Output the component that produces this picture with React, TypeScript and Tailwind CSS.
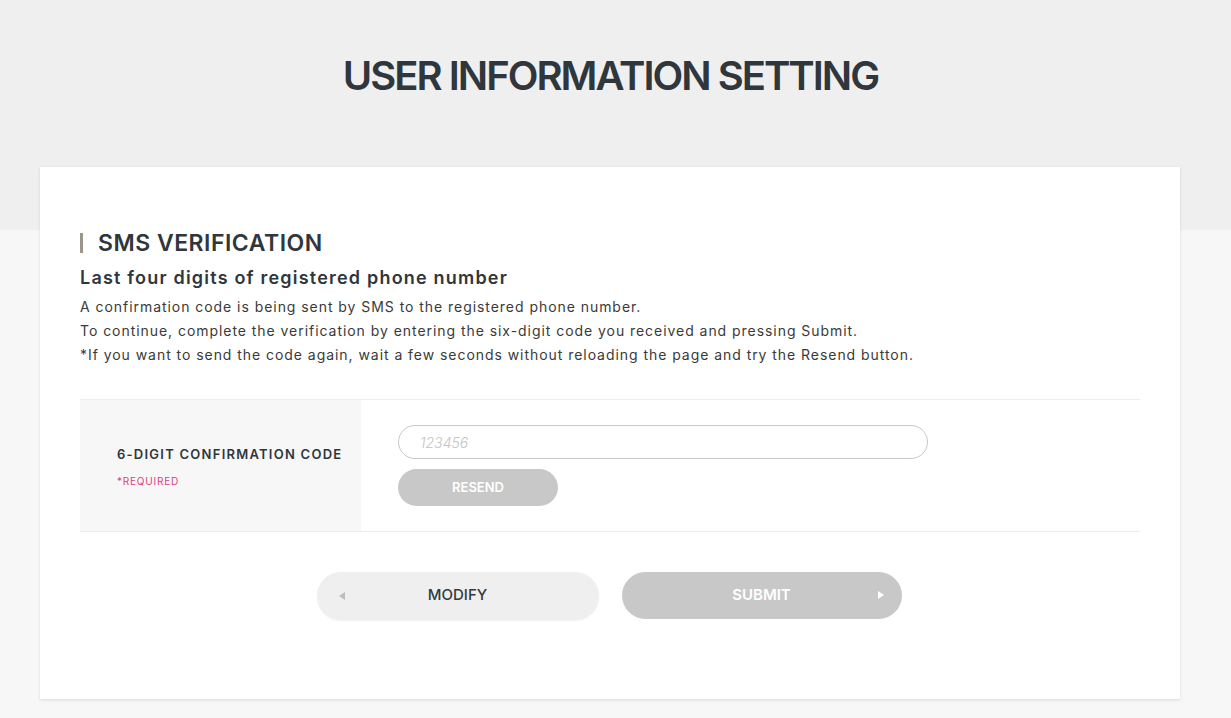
import { useState } from 'react';

const font = { fontFamily: 'Inter, "Noto Sans", sans-serif' };

export default function App() {
  const [code, setCode] = useState('');

  return (
    <div className="min-h-screen bg-[#f7f7f7] text-[#333a40]" style={font}>
      {/* Cabecera gris */}
      <div className="bg-[#efefef] h-[230px] pt-[52px] pr-[10px]">
        <h1 className="text-center text-[40px] font-semibold tracking-[-2px] leading-[48px] text-[#2f363c]">
          USER INFORMATION SETTING
        </h1>
      </div>

      <div className="-mt-[63px] pl-10 pb-5">
        <section className="w-[1140px] bg-white shadow-[0_1px_3px_rgba(0,0,0,0.12)] px-10 pt-[62px] pb-[79px]">
          <h2 className="flex items-center text-[23px] font-semibold leading-7 tracking-[0.5px] text-[#2f363c]">
            <span className="w-[3px] h-5 bg-[#9b958a] mr-[15px]" />
            SMS VERIFICATION
          </h2>

          <p className="mt-[9px] text-[18px] font-semibold leading-6 tracking-[1.2px] text-[#2f363c]">
            Last four digits of registered phone number
          </p>
          <div className="mt-[5px] text-[14px] leading-6 tracking-[0.95px] text-[#3a3a3a]">
            <p>A confirmation code is being sent by SMS to the registered phone number.</p>
            <p>To continue, complete the verification by entering the six-digit code you received and pressing Submit.</p>
            <p>*If you want to send the code again, wait a few seconds without reloading the page and try the Resend button.</p>
          </div>

          {/* Tabla del código */}
          <div className="mt-[32px] flex border-t border-b border-[#ececec]">
            <div className="w-[281px] bg-[#f7f7f7] pl-[37px] pt-[45px] pb-[42px]">
              <p className="text-[13px] font-semibold tracking-[1.25px] text-[#2f363c]">6-DIGIT CONFIRMATION CODE</p>
              <p className="mt-[9px] text-[10px] tracking-[0.8px] text-[#d9407f]">*REQUIRED</p>
            </div>
            <div className="flex-1 pl-[37px] pt-[25px]">
              <input
                value={code}
                onChange={(e) => setCode(e.target.value)}
                placeholder="123456"
                className="block w-[530px] h-[34px] rounded-full border border-[#c8c8c8] px-[21px] text-[14px] italic font-light placeholder:text-[#c4c4c4] outline-none"
              />
              <button className="mt-[10px] w-[160px] h-[37px] rounded-full bg-[#c8c8c8] text-white text-[13px] font-semibold">
                RESEND
              </button>
            </div>
          </div>

          {/* Botones */}
          <div className="mt-[40px] flex justify-center gap-[23px] pr-[2px]">
            <button className="relative w-[282px] h-[48px] rounded-full bg-[#efefef] text-[15px] font-medium text-[#333a40] shadow-[0_1px_2px_rgba(0,0,0,0.06)]">
              <span className="absolute left-[22px] top-1/2 -translate-y-1/2 w-0 h-0 border-y-[4px] border-y-transparent border-r-[6px] border-r-[#bdbdbd]" />
              MODIFY
            </button>
            <button className="relative w-[280px] h-[47px] rounded-full bg-[#c8c8c8] text-[15px] font-semibold text-white">
              SUBMIT
              <span className="absolute right-[18px] top-1/2 -translate-y-1/2 w-0 h-0 border-y-[4px] border-y-transparent border-l-[6px] border-l-white" />
            </button>
          </div>
        </section>
      </div>
    </div>
  );
}
